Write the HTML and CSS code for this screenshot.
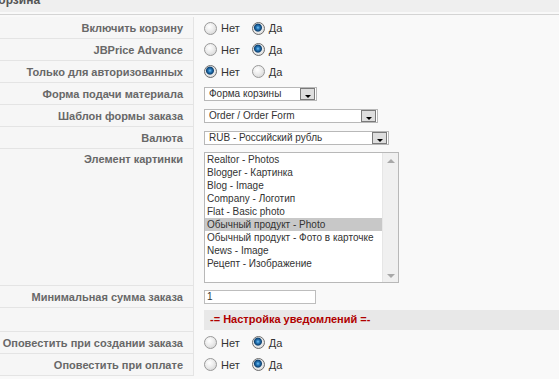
FILE: index.html
```html
<!DOCTYPE html>
<html lang="ru">
<head>
    <meta charset="UTF-8">
    <title>Корзина</title>
    <link rel="stylesheet" href="styles.css">
</head>
<body>
    <div class="header">
        <span class="header-title">Корзина</span>
    </div>
    <div class="rule"></div>

    <table class="paramlist">
        <tr>
            <td class="key">Включить корзину</td>
            <td class="value">
                <label class="opt"><input type="radio" class="radio" name="enable"> Нет</label>
                <label class="opt"><input type="radio" class="radio" name="enable" checked> Да</label>
            </td>
        </tr>
        <tr>
            <td class="key">JBPrice Advance</td>
            <td class="value">
                <label class="opt"><input type="radio" class="radio" name="advance"> Нет</label>
                <label class="opt"><input type="radio" class="radio" name="advance" checked> Да</label>
            </td>
        </tr>
        <tr>
            <td class="key">Только для авторизованных</td>
            <td class="value">
                <label class="opt"><input type="radio" class="radio" name="auth" checked> Нет</label>
                <label class="opt"><input type="radio" class="radio" name="auth"> Да</label>
            </td>
        </tr>
        <tr>
            <td class="key">Форма подачи материала</td>
            <td class="value">
                <div class="select select-short"><span class="select-text">Форма корзины</span><span class="arrow"></span></div>
            </td>
        </tr>
        <tr>
            <td class="key">Шаблон формы заказа</td>
            <td class="value">
                <div class="select select-mid"><span class="select-text">Order / Order Form</span><span class="arrow"></span></div>
            </td>
        </tr>
        <tr>
            <td class="key">Валюта</td>
            <td class="value">
                <div class="select select-long"><span class="select-text">RUB - Российский рубль</span><span class="arrow"></span></div>
            </td>
        </tr>
        <tr>
            <td class="key key-top">Элемент картинки</td>
            <td class="value value-list">
                <div class="listbox">
                    <ul class="list-items">
                        <li>Realtor - Photos</li>
                        <li>Blogger - Картинка</li>
                        <li>Blog - Image</li>
                        <li>Company - Логотип</li>
                        <li>Flat - Basic photo</li>
                        <li class="selected">Обычный продукт - Photo</li>
                        <li>Обычный продукт - Фото в карточке</li>
                        <li>News - Image</li>
                        <li>Рецепт - Изображение</li>
                    </ul>
                    <div class="scrollbar">
                        <span class="scroll-up"></span>
                        <span class="scroll-down"></span>
                    </div>
                </div>
            </td>
        </tr>
        <tr>
            <td class="key">Минимальная сумма заказа</td>
            <td class="value">
                <div class="textbox">1</div>
            </td>
        </tr>
        <tr>
            <td class="key key-section"></td>
            <td class="value value-section">
                <div class="section-title">-= Настройка уведомлений =-</div>
            </td>
        </tr>
        <tr>
            <td class="key">Оповестить при создании заказа</td>
            <td class="value">
                <label class="opt"><input type="radio" class="radio" name="notify_create"> Нет</label>
                <label class="opt"><input type="radio" class="radio" name="notify_create" checked> Да</label>
            </td>
        </tr>
        <tr>
            <td class="key">Оповестить при оплате</td>
            <td class="value">
                <label class="opt"><input type="radio" class="radio" name="notify_pay"> Нет</label>
                <label class="opt"><input type="radio" class="radio" name="notify_pay" checked> Да</label>
            </td>
        </tr>
    </table>
</body>
</html>
```

FILE: styles.css
```css
body {
    margin: 0;
    background: #f9f9f9;
    font-family: "Liberation Sans", Arial, sans-serif;
    font-size: 11px;
    color: #333;
    overflow: hidden;
}
.header {
    height: 12px;
    overflow: hidden;
    background: #efefef;
}
.header-title {
    display: block;
    margin-top: -6px;
    margin-left: -9px;
    font-size: 12px;
    line-height: 12px;
    font-weight: bold;
    color: #555;
}
.rule {
    height: 1px;
    margin-top: 2px;
    background: #d4d4d4;
}
.paramlist {
    border-collapse: collapse;
    margin-top: 2px;
    width: 100%;
}
.paramlist td {
    padding: 0;
}
.key {
    width: 183px;
    height: 21px;
    padding-right: 10px !important;
    text-align: right;
    font-weight: bold;
    color: #686868;
    background: #f6f6f6;
    border-right: 1px solid #e4e4e4;
    border-bottom: 1px solid #e4e4e4;
    white-space: nowrap;
}
.key-top {
    vertical-align: top;
    padding-top: 4px !important;
}
.value {
    padding-left: 10px !important;
    white-space: nowrap;
}
.value-list {
    padding-top: 3px !important;
    padding-bottom: 3px !important;
}
.opt {
    display: inline-flex;
    align-items: center;
    gap: 4px;
    margin-right: 9px;
    vertical-align: middle;
}
.radio {
    appearance: none;
    -webkit-appearance: none;
    width: 13px;
    height: 13px;
    margin: 0;
    border: 1px solid #9a9a9a;
    border-radius: 50%;
    background: radial-gradient(circle at 40% 35%, #ffffff 0, #ececec 45%, #cfcfcf 100%);
}
.radio:checked {
    border-color: #6f6f6f;
    background: radial-gradient(circle at 45% 42%, #7cc6f2 0, #2b7fc2 1.5px, #0d4272 3.5px, #e9e9e9 4.5px, #d2d2d2 100%);
}
.select {
    display: flex;
    align-items: center;
    justify-content: space-between;
    height: 12px;
    padding: 0 1px 0 4px;
    border: 1px solid #b8b8b8;
    background: #fff;
    font-size: 10px;
    color: #333;
    box-sizing: content-box;
}
.select-short {
    width: 106px;
}
.select-mid {
    width: 167px;
}
.select-long {
    width: 178px;
}
.arrow {
    position: relative;
    width: 13px;
    height: 10px;
    border: 1px solid #7a7a7a;
    background: #dedede;
}
.arrow::after {
    content: "";
    position: absolute;
    left: 4px;
    bottom: 1px;
    border-left: 3px solid transparent;
    border-right: 3px solid transparent;
    border-top: 3px solid #000;
}
.listbox {
    display: flex;
    width: 193px;
    height: 129px;
    border: 1px solid #b8b8b8;
    background: #fff;
}
.list-items {
    flex: 1;
    margin: 0;
    padding: 0;
    list-style: none;
    font-size: 10px;
    line-height: 13px;
    color: #333;
}
.list-items li {
    padding-left: 2px;
}
.list-items .selected {
    background: #c8c8c8;
}
.scrollbar {
    display: flex;
    flex-direction: column;
    justify-content: space-between;
    align-items: center;
    width: 16px;
    padding: 6px 0 4px;
    background: #f0f0f0;
    border-left: 1px solid #e6e6e6;
    box-sizing: border-box;
}
.scroll-up {
    border-left: 4px solid transparent;
    border-right: 4px solid transparent;
    border-bottom: 4px solid #a8a8a8;
}
.scroll-down {
    border-left: 4px solid transparent;
    border-right: 4px solid transparent;
    border-top: 4px solid #a8a8a8;
}
.textbox {
    width: 108px;
    height: 12px;
    padding-left: 2px;
    border: 1px solid #bdbdbd;
    background: #fff;
    font-size: 10px;
    line-height: 12px;
    color: #333;
}
.key-section {
    height: 23px;
}
.value-section {
    padding-top: 2px !important;
    padding-bottom: 1px !important;
}
.section-title {
    height: 20px;
    line-height: 19px;
    padding-left: 6px;
    background: #e8e8e8;
    font-weight: bold;
    color: #b00000;
}
```
